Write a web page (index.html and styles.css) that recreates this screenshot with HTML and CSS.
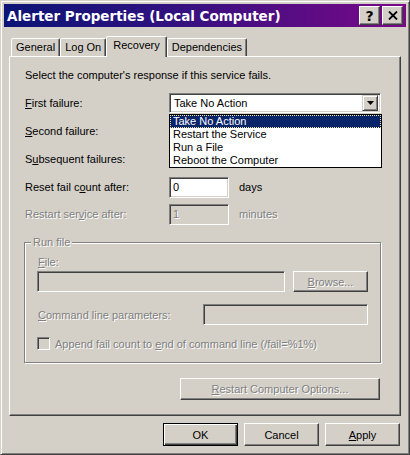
FILE: index.html
```html
<!DOCTYPE html>
<html lang="en">
<head>
    <meta charset="UTF-8">
    <title>Alerter Properties (Local Computer)</title>
    <link rel="stylesheet" href="styles.css">
</head>
<body>
    <div class="window">
        <div class="titlebar">
            <span class="title">Alerter Properties (Local Computer)</span>
            <div class="caption-btns">
                <span class="cap-btn help">?</span>
                <span class="cap-btn close">
                    <svg width="10" height="9" viewBox="0 0 10 9"><path d="M1 0.5 L9 8.5 M9 0.5 L1 8.5" stroke="#000" stroke-width="1.8" fill="none"/></svg>
                </span>
            </div>
        </div>
        <div class="client">
            <div class="tabs">
                <span class="tab">General</span>
                <span class="tab">Log On</span>
                <span class="tab active">Recovery</span>
                <span class="tab">Dependencies</span>
            </div>
            <div class="panel">
                <p class="intro">Select the computer's response if this service fails.</p>

                <div class="row first">
                    <span class="lbl"><u>F</u>irst failure:</span>
                    <div class="combo">
                        <div class="select">
                            <span class="value">Take No Action</span>
                            <span class="arrow-btn">
                                <svg width="7" height="4" viewBox="0 0 7 4"><path d="M0 0 H7 L3.5 4 Z" fill="#000"/></svg>
                            </span>
                        </div>
                        <ul class="droplist">
                            <li class="selected">Take No Action</li>
                            <li>Restart the Service</li>
                            <li>Run a File</li>
                            <li>Reboot the Computer</li>
                        </ul>
                    </div>
                </div>
                <div class="row">
                    <span class="lbl"><u>S</u>econd failure:</span>
                </div>
                <div class="row">
                    <span class="lbl">S<u>u</u>bsequent failures:</span>
                </div>
                <div class="row reset">
                    <span class="lbl">Reset fail c<u>o</u>unt after:</span>
                    <div class="field small">0</div>
                    <span class="unit">days</span>
                </div>
                <div class="row disabled">
                    <span class="lbl">Restart ser<u>v</u>ice after:</span>
                    <div class="field small off">1</div>
                    <span class="unit">minutes</span>
                </div>

                <fieldset class="group disabled">
                    <legend>Run file</legend>
                    <div class="file-label"><u>F</u>ile:</div>
                    <div class="file-row">
                        <div class="field off file-input"></div>
                        <span class="btn off browse"><u>B</u>rowse...</span>
                    </div>
                    <div class="cmd-row">
                        <span class="cmd-label"><u>C</u>ommand line parameters:</span>
                        <div class="field off cmd-input"></div>
                    </div>
                    <div class="check-row">
                        <span class="checkbox"></span>
                        <span>Append fail count to <u>e</u>nd of command line (/fail=%1%)</span>
                    </div>
                </fieldset>

                <div class="restart-row disabled">
                    <span class="btn off restart"><u>R</u>estart Computer Options...</span>
                </div>
            </div>
            <div class="footer">
                <span class="btn default">OK</span>
                <span class="btn">Cancel</span>
                <span class="btn"><u>A</u>pply</span>
            </div>
        </div>
    </div>
</body>
</html>
```

FILE: styles.css
```css
* {
    margin: 0;
    padding: 0;
    box-sizing: border-box;
}
body {
    font-family: "Liberation Sans", Arial, sans-serif;
    font-size: 11px;
    color: #000;
    background: #d4d0c8;
}
u {
    text-decoration: underline;
    text-underline-offset: 1px;
}
.window {
    width: 410px;
    height: 455px;
    background: #d4d0c8;
    border: 1px solid;
    border-color: #d4d0c8 #404040 #404040 #d4d0c8;
    box-shadow: inset 1px 1px #fff, inset -1px -1px #808080;
    padding: 3px;
    display: flex;
    flex-direction: column;
}
.titlebar {
    height: 23px;
    display: flex;
    align-items: center;
    justify-content: space-between;
    background: linear-gradient(to right, #0c1476, #2a127e 35%, #7a0888);
    padding-left: 3px;
}
.title {
    color: #fff;
    font-family: "DejaVu Sans", sans-serif;
    font-weight: bold;
    font-size: 13.5px;
}
.caption-btns {
    display: flex;
    gap: 2px;
    margin-right: 3px;
}
.cap-btn {
    width: 21px;
    height: 19px;
    background: #d4d0c8;
    border: 1px solid;
    border-color: #fff #404040 #404040 #fff;
    box-shadow: inset -1px -1px #808080;
    display: flex;
    align-items: center;
    justify-content: center;
}
.cap-btn.help {
    font-family: "DejaVu Sans", sans-serif;
    font-weight: bold;
    font-size: 14px;
    line-height: 1;
}
.client {
    flex: 1;
    padding: 9px 5px 0 5px;
    display: flex;
    flex-direction: column;
}
.tabs {
    display: flex;
    align-items: flex-end;
    height: 20px;
    padding-left: 2px;
    position: relative;
    z-index: 1;
}
.tab {
    height: 18px;
    line-height: 17px;
    padding: 0 4px;
    border: 1px solid;
    border-bottom: none;
    border-color: #fff #404040 transparent #fff;
    box-shadow: inset -1px 0 #808080;
    border-radius: 2px 2px 0 0;
    background: #d4d0c8;
}
.tab.active {
    height: 21px;
    line-height: 17px;
    margin-bottom: -1px;
    padding: 0 6px 0 6px;
}
.panel {
    height: 360px;
    border: 1px solid;
    border-color: #fff #404040 #404040 #fff;
    box-shadow: inset -1px -1px #808080;
    padding: 11px 0 0 15px;
}
.intro {
    line-height: 14px;
}
.row {
    display: flex;
    align-items: center;
    height: 20px;
    margin-top: 8px;
}
.row.first {
    margin-top: 11px;
}
.row.disabled {
    margin-top: 7px;
}
.lbl {
    width: 144px;
    flex-shrink: 0;
}
.combo {
    position: relative;
    width: 212px;
}
.select {
    height: 20px;
    background: #fff;
    border: 1px solid;
    border-color: #808080 #fff #fff #808080;
    box-shadow: inset 1px 1px #404040, inset -1px -1px #d4d0c8;
    display: flex;
    align-items: center;
    justify-content: space-between;
    padding: 2px 2px 2px 4px;
}
.arrow-btn {
    width: 16px;
    height: 16px;
    background: #d4d0c8;
    border: 1px solid;
    border-color: #d4d0c8 #404040 #404040 #d4d0c8;
    box-shadow: inset 1px 1px #fff, inset -1px -1px #808080;
    display: flex;
    align-items: center;
    justify-content: center;
}
.droplist {
    position: absolute;
    left: 0;
    top: 21px;
    width: 213px;
    list-style: none;
    background: #fff;
    border: 1px solid #000;
    z-index: 2;
}
.droplist li {
    height: 13px;
    line-height: 13px;
    padding-left: 3px;
}
.droplist li.selected {
    background: #0a246a;
    color: #fff;
    outline: 1px dotted #f0e8a0;
    outline-offset: -1px;
}
.field {
    height: 21px;
    background: #fff;
    border: 1px solid;
    border-color: #808080 #fff #fff #808080;
    box-shadow: inset 1px 1px #404040, inset -1px -1px #d4d0c8;
    padding: 3px 0 0 3px;
}
.field.small {
    width: 60px;
}
.field.off {
    background: #d4d0c8;
}
.unit {
    margin-left: 10px;
}
.disabled,
.disabled .lbl,
.off {
    color: #808080;
    text-shadow: 1px 1px #fff;
}
.group {
    margin: 12px 0 0 -1px;
    width: 357px;
    height: 127px;
    border: 1px solid #808080;
    box-shadow: 1px 1px #fff, inset 1px 1px #fff;
    padding: 6px 12px 0 12px;
}
.group legend {
    margin-left: -6px;
    padding: 0 2px;
    line-height: 13px;
    background: #d4d0c8;
}
.file-label {
    line-height: 14px;
    padding-left: 1px;
}
.file-row {
    display: flex;
    gap: 8px;
    margin-top: 2px;
}
.file-input {
    width: 248px;
}
.btn {
    width: 75px;
    height: 23px;
    display: flex;
    align-items: center;
    justify-content: center;
    background: #d4d0c8;
    border: 1px solid;
    border-color: #fff #404040 #404040 #fff;
    box-shadow: inset -1px -1px #808080;
}
.btn.browse {
    height: 21px;
}
.cmd-row {
    display: flex;
    align-items: center;
    justify-content: space-between;
    margin-top: 12px;
}
.cmd-label {
    padding-left: 1px;
}
.cmd-input {
    width: 165px;
}
.check-row {
    display: flex;
    align-items: center;
    gap: 5px;
    margin-top: 12px;
}
.checkbox {
    width: 13px;
    height: 13px;
    background: #d4d0c8;
    border: 1px solid;
    border-color: #808080 #fff #fff #808080;
    box-shadow: inset 1px 1px #404040, inset -1px -1px #d4d0c8;
}
.restart-row {
    display: flex;
    justify-content: flex-end;
    padding-right: 20px;
    margin-top: 15px;
}
.btn.restart {
    width: 200px;
    height: 22px;
}
.footer {
    display: flex;
    justify-content: flex-end;
    gap: 6px;
    margin-top: 7px;
    padding-right: 1px;
}
.btn.default {
    border: 1px solid #000;
    box-shadow: inset 1px 1px #fff, inset -1px -1px #404040, inset -2px -2px #808080;
}
```
